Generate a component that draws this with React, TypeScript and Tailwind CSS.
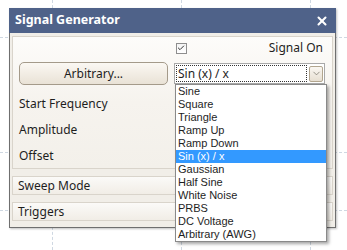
import { Check, ChevronDown, X } from 'lucide-react';

const waves = [
  'Sine',
  'Square',
  'Triangle',
  'Ramp Up',
  'Ramp Down',
  'Sin (x) / x',
  'Gaussian',
  'Half Sine',
  'White Noise',
  'PRBS',
  'DC Voltage',
  'Arbitrary (AWG)',
];

const font = { fontFamily: '"Noto Sans", "Open Sans", sans-serif' };
const listFont = { fontFamily: '"Liberation Sans", Arial, sans-serif' };

export default function App() {
  return (
    <div className="relative h-[250px] w-[347px] overflow-hidden bg-white text-[12px] text-[#1e1e1e]" style={font}>
      {/* faint chart grid behind the dialog */}
      <div className="absolute left-[52px] top-0 h-full border-l border-dashed border-[#cfd8e2]" />
      <div className="absolute left-[181px] top-0 h-full border-l border-dashed border-[#cfd8e2]" />
      <div className="absolute left-[310px] top-0 h-full border-l border-dashed border-[#cfd8e2]" />
      <div className="absolute left-0 top-[37px] w-full border-t border-dashed border-[#cfd8e2]" />
      <div className="absolute left-0 top-[152px] w-full border-t border-dashed border-[#cfd8e2]" />
      <div className="absolute left-0 top-[210px] w-full border-t border-dashed border-[#cfd8e2]" />

      <div className="relative ml-[9px] mt-[8px] flex h-[220px] w-[327px] flex-col shadow-[1px_1px_2px_rgba(0,0,0,0.25)]">
        <div className="flex h-[25px] items-center justify-between bg-[#4f6289] pl-[6px] pr-[7px] text-white">
          <span className="text-[12.5px] font-bold">Signal Generator</span>
          <X size={14} strokeWidth={3.5} />
        </div>

        <div className="flex flex-1 flex-col gap-[7px] border border-t-0 border-[#6f6f6f] bg-[#f1eee8] px-[2px] pb-[5px] pt-[3px]">
          <div className="flex h-[133px] flex-col border border-[#d9d4cb] bg-gradient-to-b from-[#fdfcfa] via-[#f6f3ee] to-[#f3f0ea] px-[6px]">
            <div className="flex h-[20px] items-center justify-end pt-[2px]">
              <div className="mr-[82px] flex h-[11px] w-[11px] items-center justify-center border border-[#8e8e8e] bg-gradient-to-b from-[#f4f4f4] to-white">
                <Check size={8} strokeWidth={3} className="text-[#333]" />
              </div>
              <span className="pr-[3px]">Signal On</span>
            </div>

            <div className="mt-[5px] flex items-start justify-between">
              <div className="flex h-[23px] w-[149px] items-center justify-center rounded-[5px] border border-[#a49a8a] bg-gradient-to-b from-[#fbf8f3] to-[#e9e2d6]">
                Arbitrary...
              </div>
              <div className="mr-[1px] mt-[1px] flex h-[21px] w-[151px] items-center border border-[#a9a9a9] bg-white px-[1px]">
                <div className="flex h-[17px] flex-1 items-center border border-dotted border-[#333] px-[1px] leading-none">
                  Sin (x) / x
                </div>
                <div className="ml-[2px] flex h-[16px] w-[14px] items-center justify-center rounded-[2px] border border-[#b2a68f] bg-gradient-to-b from-[#faf7f2] to-[#e7dfd2]">
                  <ChevronDown size={11} strokeWidth={1.5} className="text-[#6f6a60]" />
                </div>
              </div>
            </div>

            <div className="mt-[6px] flex flex-col">
              <div className="flex h-[26px] items-center">Start Frequency</div>
              <div className="flex h-[26px] items-center">Amplitude</div>
              <div className="flex h-[26px] items-center">Offset</div>
            </div>
          </div>

          <div className="flex h-[19px] items-center border border-[#d9d4cb] bg-gradient-to-b from-[#fbfaf8] to-[#f1ede6] px-[5px]">
            Sweep Mode
          </div>
          <div className="flex h-[19px] items-center border border-[#d9d4cb] bg-gradient-to-b from-[#fbfaf8] to-[#f1ede6] px-[5px]">
            Triggers
          </div>
        </div>
      </div>

      {/* open combo list */}
      <div
        className="absolute left-[175px] top-[84px] w-[152px] border border-[#8a8a8a] bg-white text-[11px] shadow-[2px_2px_3px_rgba(0,0,0,0.35)]"
        style={listFont}
      >
        {waves.map((w) => (
          <div
            key={w}
            className={
              w === 'Sin (x) / x'
                ? 'flex h-[13px] items-center bg-[#3399ff] pl-[2px] leading-[13px] text-white'
                : 'flex h-[13px] items-center pl-[2px] leading-[13px]'
            }
          >
            {w}
          </div>
        ))}
      </div>
    </div>
  );
}
